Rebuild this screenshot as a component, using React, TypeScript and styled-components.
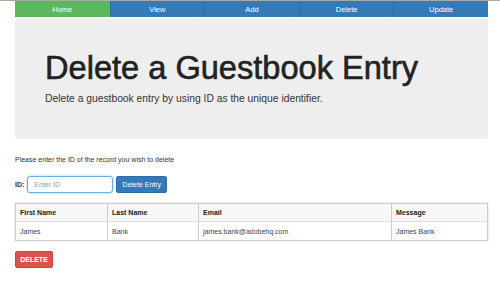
import { createGlobalStyle } from "styled-components";
import styled from "styled-components";

const GlobalStyle = createGlobalStyle`
  html, body {
    margin: 0;
    padding: 0;
    background: #fff;
    font-family: "Liberation Sans", Arial, sans-serif;
    color: #333;
  }
  body {
    border-top: 1px solid #a9a9a9;
  }
`;

const Page = styled.div`
  width: 473px;
  margin-left: 15px;
`;

const Nav = styled.nav`
  display: grid;
  grid-template-columns: repeat(5, 1fr);
  height: 16px;
`;

const NavItem = styled.a<{ $active?: boolean }>`
  display: flex;
  align-items: center;
  justify-content: center;
  font-size: 7.5px;
  color: #fff;
  text-decoration: none;
  background: ${(p) => (p.$active ? "#5cb85c" : "#337ab7")};
  border-left: 1px solid ${(p) => (p.$active ? "#4cae4c" : "#2e6da4")};
  &:first-child {
    border-left: none;
  }
`;

const Jumbotron = styled.header`
  margin-top: 2px;
  height: 120px;
  box-sizing: border-box;
  padding: 31px 30px 0;
  background: #eee;
  border-radius: 3px;
`;

const Title = styled.h1`
  margin: 0;
  font-size: 32.6px;
  line-height: 35px;
  font-weight: normal;
  color: #222;
  -webkit-text-stroke: 0.6px #222;
`;

const Lead = styled.p`
  margin: 7px 0 0;
  font-size: 10.3px;
  line-height: 14px;
  color: #333;
`;

const Hint = styled.p`
  margin: 16px 0 0;
  font-size: 7px;
  line-height: 10px;
`;

const FormRow = styled.form`
  display: flex;
  align-items: center;
  margin-top: 11px;
  height: 17px;
`;

const Label = styled.label`
  font-size: 7px;
  font-weight: bold;
  margin-right: 3px;
`;

const Input = styled.input`
  box-sizing: border-box;
  width: 86px;
  height: 17px;
  border: 1px solid #66afe9;
  border-radius: 3px;
  box-shadow: 0 0 3px rgba(102, 175, 233, 0.6);
  padding: 0 6px;
  font-family: inherit;
  font-size: 7px;
  outline: none;
  &::placeholder {
    color: #999;
  }
`;

const Button = styled.button<{ $variant: "primary" | "danger" }>`
  box-sizing: border-box;
  height: 17px;
  padding: 0;
  white-space: nowrap;
  border: 1px solid ${(p) => (p.$variant === "danger" ? "#d43f3a" : "#2e6da4")};
  border-radius: 2px;
  background: ${(p) => (p.$variant === "danger" ? "#d9534f" : "#337ab7")};
  color: #fff;
  font-family: inherit;
  font-size: 7px;
  cursor: pointer;
`;

const EntryButton = styled(Button)`
  margin-left: 3px;
  width: 51px;
`;

const Table = styled.table`
  margin-top: 10px;
  width: 100%;
  table-layout: fixed;
  border-collapse: collapse;
  border: 1px solid #999;
  box-shadow: 0 0 1px rgba(0, 0, 0, 0.3);
  font-size: 7px;
`;

const Th = styled.th<{ $w?: number }>`
  box-sizing: border-box;
  width: ${(p) => (p.$w ? `${p.$w}px` : "auto")};
  height: 18px;
  padding: 0 4px;
  text-align: left;
  font-weight: bold;
  color: #222;
  background: #f7f7f7;
  border: 1px solid #ccc;
  border-bottom: 1px solid #ddd;
`;

const Td = styled.td`
  height: 18px;
  padding: 0 4px;
  color: #444;
  border: 1px solid #ccc;
  border-top: none;
  white-space: nowrap;
`;

const DeleteButton = styled(Button)`
  margin-top: 10px;
  width: 38px;
  font-weight: bold;
`;

export default function App() {
  const tabs = ["Home", "View", "Add", "Delete", "Update"];
  return (
    <>
      <GlobalStyle />
      <Page>
        <Nav>
          {tabs.map((t, i) => (
            <NavItem key={t} href="#" $active={i === 0}>
              {t}
            </NavItem>
          ))}
        </Nav>
        <Jumbotron>
          <Title>Delete a Guestbook Entry</Title>
          <Lead>Delete a guestbook entry by using ID as the unique identifier.</Lead>
        </Jumbotron>
        <Hint>Please enter the ID of the record you wish to delete</Hint>
        <FormRow onSubmit={(e) => e.preventDefault()}>
          <Label htmlFor="id">ID:</Label>
          <Input id="id" placeholder="Enter ID" />
          <EntryButton $variant="primary">Delete Entry</EntryButton>
        </FormRow>
        <Table>
          <thead>
            <tr>
              <Th $w={92}>First Name</Th>
              <Th $w={91}>Last Name</Th>
              <Th $w={193}>Email</Th>
              <Th>Message</Th>
            </tr>
          </thead>
          <tbody>
            <tr>
              <Td>James</Td>
              <Td>Bank</Td>
              <Td>james.bank@adobehq.com</Td>
              <Td>James Bank</Td>
            </tr>
          </tbody>
        </Table>
        <DeleteButton $variant="danger">DELETE</DeleteButton>
      </Page>
    </>
  );
}
